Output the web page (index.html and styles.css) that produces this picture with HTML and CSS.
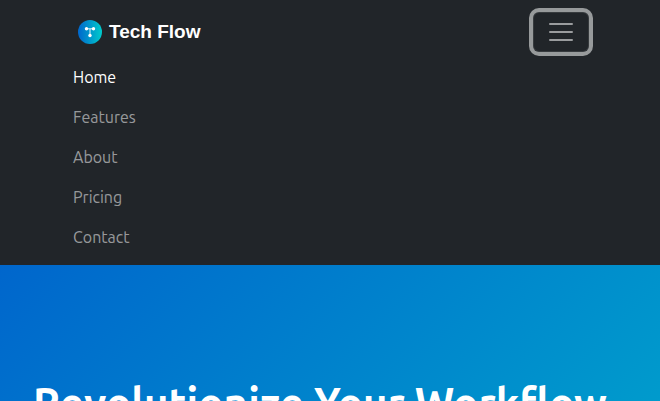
FILE: index.html
```html
<!DOCTYPE html>
<html lang="en">
<head>
<meta charset="utf-8">
<meta name="viewport" content="width=device-width, initial-scale=1">
<title>Tech Flow</title>
<link rel="stylesheet" href="styles.css">
</head>
<body>
<nav class="navbar" aria-label="Main">
  <div class="container">
    <div class="navbar-top">
      <a class="brand" href="#">
        <svg class="brand-icon" viewBox="0 0 24 24" aria-hidden="true">
          <defs>
            <linearGradient id="brand-gradient" x1="0" y1="0" x2="1" y2="0">
              <stop offset="0" stop-color="#0066cc"/>
              <stop offset="1" stop-color="#00cccc"/>
            </linearGradient>
          </defs>
          <circle cx="12" cy="12" r="12" fill="url(#brand-gradient)"/>
          <path d="M8.500 8.800H15.500M12 9V15.500" fill="none" stroke="#fff" stroke-width=".9"/>
          <circle cx="8.500" cy="8.800" r="1.700" fill="#fff"/>
          <circle cx="15.500" cy="8.800" r="1.700" fill="#fff"/>
          <circle cx="12" cy="15.500" r="1.700" fill="#fff"/>
        </svg>
        <span>Tech Flow</span>
      </a>
      <button class="toggler" type="button" aria-label="Toggle navigation" aria-expanded="true">
        <svg class="toggler-icon" viewBox="0 0 30 30" aria-hidden="true">
          <path d="M4 7h22M4 15h22M4 23h22" fill="none" stroke="currentColor" stroke-width="2" stroke-linecap="round"/>
        </svg>
      </button>
    </div>
    <ul class="nav-list">
      <li><a class="nav-link active" href="#">Home</a></li>
      <li><a class="nav-link" href="#">Features</a></li>
      <li><a class="nav-link" href="#">About</a></li>
      <li><a class="nav-link" href="#">Pricing</a></li>
      <li><a class="nav-link" href="#">Contact</a></li>
    </ul>
  </div>
</nav>
<header class="hero">
  <h1>Revolutionize Your Workflow</h1>
</header>
</body>
</html>
```
FILE: styles.css
```css
* { box-sizing: border-box; }
body {
  margin: 0;
  font-family: Ubuntu, "Open Sans", "Noto Sans", sans-serif;
  font-size: 16px;
  line-height: 24px;
  height: 100vh;
  overflow: hidden;
}
.navbar { background: #212529; padding: 8px 0; }
.container { max-width: 540px; margin: 0 auto; padding: 0 11px 0 13px; }
.navbar-top {
  display: flex;
  align-items: center;
  justify-content: space-between;
  min-height: 48px;
}
.brand {
  display: flex;
  align-items: center;
  gap: 7px;
  padding-left: 5px;
  color: #fff;
  font-family: "Liberation Sans", Arial, sans-serif;
  font-size: 19px;
  font-weight: 700;
  text-decoration: none;
}
.brand-icon { width: 24px; height: 24px; }
.toggler {
  display: flex;
  padding: 4px 12px;
  border: 1px solid rgba(255, 255, 255, .1);
  border-radius: 6px;
  background: transparent;
  color: rgba(255, 255, 255, .55);
  box-shadow: 0 0 0 4px #979a9b;
}
.toggler-icon { width: 30px; height: 30px; }
.nav-list { margin: 0; padding: 1px 0 0; list-style: none; }
.nav-link {
  display: block;
  padding: 8px 0;
  color: rgba(255, 255, 255, .55);
  text-decoration: none;
}
.nav-link.active { color: #fff; }
.hero {
  min-height: 880px;
  padding: 110px 33px;
  background: linear-gradient(135deg, #0066cc, #00cccc);
  color: #fff;
}
.hero h1 { margin: 0; font-size: 42px; line-height: 56px; font-weight: 700; }
```
